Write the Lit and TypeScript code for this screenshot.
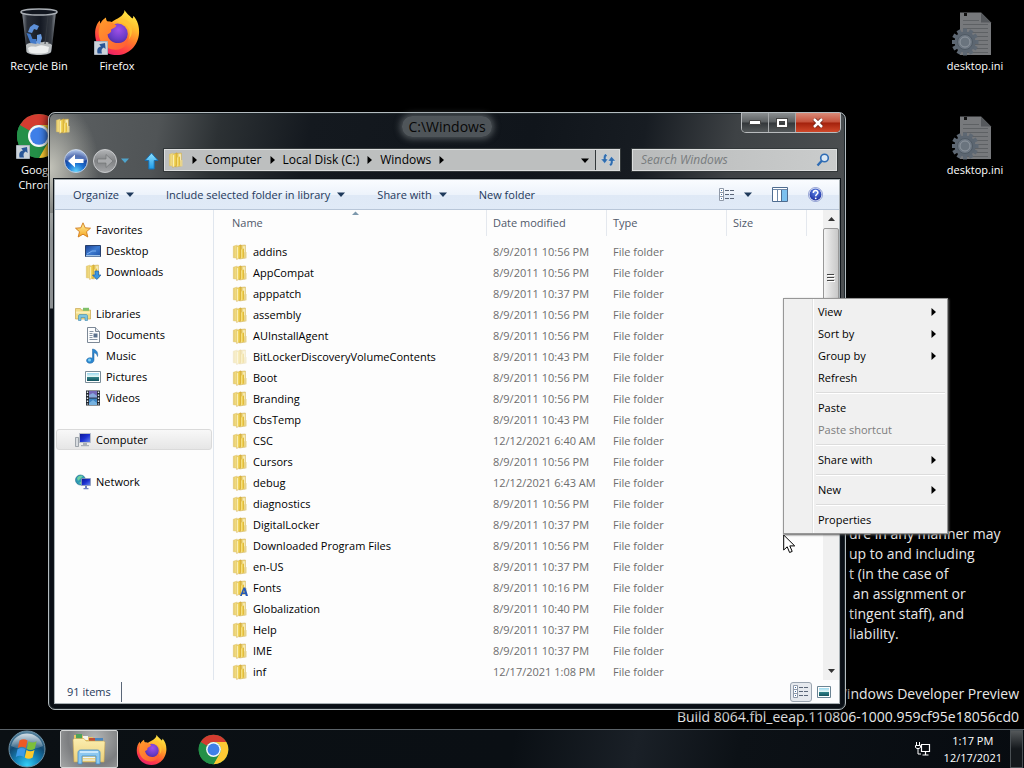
import { LitElement, html, svg, css, nothing } from "lit";
import { customElement } from "lit/decorators.js";

const P = "8/9/2011 ";
const FILES: [string, string, string?][] = [
  ["addins", P + "10:56 PM"],
  ["AppCompat", P + "10:56 PM"],
  ["apppatch", P + "10:37 PM"],
  ["assembly", P + "10:56 PM"],
  ["AUInstallAgent", P + "10:56 PM"],
  ["BitLockerDiscoveryVolumeContents", P + "10:43 PM", "faded"],
  ["Boot", P + "10:56 PM"],
  ["Branding", P + "10:56 PM"],
  ["CbsTemp", P + "10:43 PM"],
  ["CSC", "12/12/2021 6:40 AM"],
  ["Cursors", P + "10:56 PM"],
  ["debug", "12/12/2021 6:43 AM"],
  ["diagnostics", P + "10:56 PM"],
  ["DigitalLocker", P + "10:37 PM"],
  ["Downloaded Program Files", P + "10:56 PM"],
  ["en-US", P + "10:37 PM"],
  ["Fonts", P + "10:16 PM", "fonts"],
  ["Globalization", P + "10:40 PM"],
  ["Help", P + "10:37 PM"],
  ["IME", P + "10:37 PM"],
  ["inf", "12/17/2021 1:08 PM"],
];

type MenuEntry = { label: string; sub?: boolean; disabled?: boolean } | null;
const MENU: MenuEntry[] = [
  { label: "View", sub: true },
  { label: "Sort by", sub: true },
  { label: "Group by", sub: true },
  { label: "Refresh" },
  null,
  { label: "Paste" },
  { label: "Paste shortcut", disabled: true },
  null,
  { label: "Share with", sub: true },
  null,
  { label: "New", sub: true },
  null,
  { label: "Properties" },
];

const defs = html`<svg class="defs" aria-hidden="true">
  <defs>
    <linearGradient id="fold" x1="0" x2="1"><stop offset="0" stop-color="#fbeb9a"/><stop offset=".45" stop-color="#f0d355"/><stop offset="1" stop-color="#d9ae32"/></linearGradient>
    <linearGradient id="foldBack" x1="0" x2="1"><stop offset="0" stop-color="#e6ca68"/><stop offset="1" stop-color="#f6e48e"/></linearGradient>
    <linearGradient id="star" x1="0" y1="0" x2="0" y2="1"><stop offset="0" stop-color="#fff2a0"/><stop offset="1" stop-color="#f5a623"/></linearGradient>
    <linearGradient id="blueScr" x1="0" y1="0" x2="1" y2="1"><stop offset="0" stop-color="#1c3f92"/><stop offset=".5" stop-color="#3d7bd0"/><stop offset="1" stop-color="#1d52a8"/></linearGradient>
    <linearGradient id="deepScr" x1="0" y1="0" x2="1" y2="1"><stop offset="0" stop-color="#0a1590"/><stop offset=".5" stop-color="#1b2fd0"/><stop offset="1" stop-color="#6c8ff0"/></linearGradient>
    <linearGradient id="arrowBlue" x1="0" y1="0" x2="0" y2="1"><stop offset="0" stop-color="#8fe2ff"/><stop offset="1" stop-color="#1d9be8"/></linearGradient>
    <radialGradient id="back" cx=".5" cy=".95" r=".9"><stop offset="0" stop-color="#5fd4ff"/><stop offset=".4" stop-color="#1a6fd0"/><stop offset=".75" stop-color="#1c3f96"/><stop offset="1" stop-color="#8aa8dc"/></radialGradient>
    <linearGradient id="fwd" x1="0" y1="0" x2="0" y2="1"><stop offset="0" stop-color="#b4b6b8"/><stop offset=".5" stop-color="#808284"/><stop offset="1" stop-color="#a4a6a8"/></linearGradient>
    <linearGradient id="ffBody" x1=".8" y1="0" x2=".3" y2="1"><stop offset="0" stop-color="#fff04a"/><stop offset=".3" stop-color="#ffbd2e"/><stop offset=".55" stop-color="#ff7a2a"/><stop offset=".8" stop-color="#ff3a48"/><stop offset="1" stop-color="#e8206c"/></linearGradient>
    <linearGradient id="ffHead" x1="0" y1="0" x2="1" y2="1"><stop offset="0" stop-color="#ff9a2a"/><stop offset="1" stop-color="#ff5a36"/></linearGradient>
    <radialGradient id="ffGlobe" cx=".55" cy=".3" r=".75"><stop offset="0" stop-color="#a050e8"/><stop offset=".6" stop-color="#6a3cc8"/><stop offset="1" stop-color="#4a2a98"/></radialGradient>
    <radialGradient id="orb" cx=".5" cy=".95" r=".95"><stop offset="0" stop-color="#35d0f8"/><stop offset=".35" stop-color="#1683b8"/><stop offset=".65" stop-color="#124a72"/><stop offset="1" stop-color="#5a86a0"/></radialGradient>
    <linearGradient id="orbGloss" x1="0" y1="0" x2="0" y2="1"><stop offset="0" stop-color="#fff" stop-opacity=".75"/><stop offset="1" stop-color="#fff" stop-opacity=".12"/></linearGradient>
    <linearGradient id="bin" x1="0" x2="1"><stop offset="0" stop-color="#8a9098"/><stop offset=".15" stop-color="#2a2f38"/><stop offset=".55" stop-color="#151a24"/><stop offset=".85" stop-color="#333840"/><stop offset="1" stop-color="#858a90"/></linearGradient>
    <linearGradient id="bigFold" x1="0" y1="0" x2="0" y2="1"><stop offset="0" stop-color="#fbeeb0"/><stop offset="1" stop-color="#ecd07a"/></linearGradient>
    <linearGradient id="pic" x1="0" y1="0" x2="0" y2="1"><stop offset="0" stop-color="#9ad8f0"/><stop offset=".45" stop-color="#e4f6f4"/><stop offset=".55" stop-color="#2f7f86"/><stop offset="1" stop-color="#155560"/></linearGradient>
    <radialGradient id="helpG" cx=".5" cy=".3" r=".7"><stop offset="0" stop-color="#5f86e8"/><stop offset="1" stop-color="#1c2fa0"/></radialGradient>
  </defs>
</svg>`;

const ico = (w: number, h: number, vb: string, body: unknown, cls = "") =>
  html`<svg class="ico ${cls}" width=${w} height=${h} viewBox=${vb} aria-hidden="true">${body}</svg>`;

const folderShape = svg`
  <path d="M7.5 1.5 13.4 1v13l-5.9 1z" fill="url(#foldBack)" stroke="#c9a445" stroke-width=".5"/>
  <path d="M11.5 2.2h1v7h-1z" fill="#fff" opacity=".75"/>
  <path d="M12.4 8h2.1v6.2l-2.1.4z" fill="#e7d38c"/>
  <path d="M1.3 2.2 5.2 1v13.200l-3.900-.4z" fill="url(#foldBack)" stroke="#d8bb62" stroke-width=".4"/>
  <path d="M4.600 2.600 8.600.9c.4-.1.6.1.6.5v11.400c0 .4-.2.7-.5.8L4.600 15.600z" fill="url(#fold)" stroke="#c9a03a" stroke-width=".4"/>
  <path d="M9.200 5.500 12 4.400v9.200l-2.800 1z" fill="url(#fold)"/>
  <path d="M5.300 3.100v11.400" stroke="#fffbe0" stroke-width=".7"/>`;
const folder = (kind?: string) =>
  ico(16, 16, "0 0 16 16", svg`${folderShape}${kind === "fonts"
    ? svg`<path fill-rule="evenodd" d="M8 16l3.400-8.600h2L16 16h-2.200l-.6-1.900h-2.800L9.800 16zm3-3.400h1.700l-.8-2.600z" fill="#2558b8"/>` : nothing}`,
    kind === "faded" ? "faded" : "");

const chrome = (s: number) => ico(s, s, "0 0 48 48", svg`
  <circle cx="24" cy="24" r="23" fill="#249048"/>
  <path d="M24 1a23 23 0 0 1 19.9 11.500H24A11.500 11.500 0 0 0 14 18.200L4.100 12.500A23 23 0 0 1 24 1z" fill="#d43c30"/>
  <path d="M43.900 12.500A23 23 0 0 1 24 47l9.960-17.250A11.500 11.500 0 0 0 24 12.500z" fill="#fcc934"/>
  <path d="M4.100 12.500 14.040 29.750A11.500 11.500 0 0 0 24 35.500a11 11 0 0 0 6-1.600L24 47A23 23 0 0 1 4.100 12.500z" fill="#249048"/>
  <circle cx="24" cy="24" r="11.500" fill="#f6f8fa"/><circle cx="24" cy="24" r="9.200" fill="#3f7fe8"/>`);

const firefox = (s: number) => ico(s, s, "0 0 48 48", svg`
  <path d="M32 1c1 3 5 5.500 8 9 1-.5 1-2 1-3 4.500 5 6.500 11 6 18.500C46 38.500 36 48 24 48 11 48 1.200 38.500 1.200 26 1 20 3 15 6 12l.6 3.500C8 12 10 10.500 12.500 8.800c0 2 .5 3 1.500 4.200 1.500 0 3-.1 4.500.5 5-4 12.500-5 13.500-12.500z" fill="url(#ffBody)"/>
  <circle cx="24.500" cy="26" r="10.800" fill="url(#ffGlobe)"/>
  <path d="M6.600 15.500c2-2 5-3 8-2.300 3 .3 6 1 8.900 4.300-1.500 2.500-5 3-6 4.500 1.500 1.500-1 3.500-3.500 4.500 1 6 6 9.500 12 9 6.500-.5 9.500-5.500 9.500-10 2.500 8-3 17-13 17C11 42.500 4 33 5 23z" fill="url(#ffHead)"/>
  <path d="M24 14c7-1 12 3 13 9 1 4 0 7-1 9 5-5 5-14 0-19-3-3-8-3-12 1z" fill="#ffc233"/>`);

const shortcut = html`<span class="shortcut">${ico(14, 14, "0 0 14 14", svg`
  <path d="M.5.500h13v13h-13z" fill="#ccd3da" stroke="#a8b0ba"/>
  <path d="M3.600 12.500C2.600 8.500 4 6 7 5.600L5.200 3.200 11 2l.6 6-1.900-1.500C7.500 7.400 7 9.500 8 12.500z" fill="#2a5696"/>`)}</span>`;

const recycle = ico(40, 48, "0 0 40 48", svg`
  <path d="M3 4 7.500 43c.5 3 4.500 4 12.500 4s12-1 12.500-4L37 4z" fill="url(#bin)"/>
  <path d="M7 37c3-3 5-1 8-3s6 1 9 0 6 0 9 3l-1 7c-3 4-21 4-24.500 0z" fill="#b9bdbf"/>
  <path d="M9 40c4-3 7 0 10-2s8 0 11 1l-1 5c-4 2-15 2-19 0z" fill="#eceeee"/>
  <ellipse cx="20" cy="4" rx="18" ry="3" fill="#11161f" stroke="#a9aeb4" stroke-width="1.500"/>
  <path d="M11 19l4-3 5 2-2 4-3-1-2 4-4-1z" fill="#5d90d8"/>
  <path d="M7.500 25l4 1 2 5 4 0v5l-6-1z" fill="#4279c8"/>
  <path d="M18 27l4-1 1 4-2 6-4-1 1-3z" fill="#6a9ce0"/>
  <path d="M29 8l-3 28M33 8l-3 28" stroke="#33383f" stroke-width="1"/>`);

const teeth = Array.from({ length: 12 }, (_, i) => i * 30);
const iniFile = ico(40, 44, "0 0 40 44", svg`
  <path d="M8 .5h21l10 10V43H8z" fill="#77797c"/>
  <path d="M29 .5v10h10z" fill="#56595d"/>
  <path d="M12 1h3v3h-3z" fill="#111"/>
  ${[8, 12, 16, 20, 24, 28, 32, 36, 40].map((y) => svg`<path d="M11 ${y}.5h${y < 11 ? 16 : 25}" stroke="#5e6164"/>`)}
  ${teeth.map((a) => svg`<path d="M11 16.500h4v5h-4z" fill="#5e6873" transform="rotate(${a} 13 30)"/>`)}
  <circle cx="13" cy="30" r="10.500" fill="#5c6671"/>
  <circle cx="13" cy="30" r="7.500" fill="#6e7883" stroke="#505a64"/>
  <circle cx="13" cy="30" r="5" fill="#6a747e" stroke="#8f979f"/>`);

const orb = ico(38, 38, "0 0 38 38", svg`
  <circle cx="19" cy="19" r="18" fill="url(#orb)" stroke="#6f93a8" stroke-width="1"/>
  <path d="M3 16a16.500 16.500 0 0 1 32 0c-9 4-22 5-32 0z" fill="url(#orbGloss)"/>
  <path d="M11.500 10.500c3-1.800 5.500-1.700 8 0L17.800 18c-2.600-1.700-5-1.700-8 0z" fill="#ee5a24"/>
  <path d="M20.600 11.200c2.600 1.600 5.200 1.600 8 0L26.800 18.700c-2.800 1.600-5.400 1.600-8 0z" fill="#7cbf3a"/>
  <path d="M9.500 19.300c3-1.700 5.400-1.700 8 0L15.800 27c-2.600-1.700-5-1.700-8 0z" fill="#3c9ae8"/>
  <path d="M18.500 20c2.600 1.700 5.200 1.700 8 0l-1.800 7.500c-2.800 1.700-5.300 1.700-8 0z" fill="#fdc92c"/>`);

const explorerIcon = ico(34, 32, "0 0 34 32", svg`
  <path d="M2 2h8l2 2h9v24H2z" fill="#e9c765"/>
  <path d="M4 1h6v5H4z" fill="#4fa35a"/><path d="M11 3h5v4h-5z" fill="#f4f4ee"/><path d="M17 5h6v4h-6z" fill="#c05038"/>
  <path d="M23 5h8v8h-8z" fill="#4a86c0"/>
  <path d="M1 7c0-1 1-1.500 2-1.500h9l2 2.500h17c1 0 2 .5 2 1.500L32 29H2z" fill="url(#bigFold)" stroke="#c8a450" stroke-width=".6"/>
  <path d="M6 31V20c0-2 1-3 3-3h16c2 0 3 1 3 3v11h-4v-8H10v8z" fill="#8cc8f0" stroke="#3f8cc8" stroke-width=".8"/>
  <path d="M8 19h18" stroke="#dff3ff" stroke-width="1.500"/>
  <path d="M11 27h12M11 24.500h12" stroke="#e8f6ff"/>`);

const NAV: Record<string, unknown> = {
  Favorites: svg`<path d="M8 .8 10.200 5.800 15.500 6.200 11.500 9.700 12.800 15 8 12.200 3.200 15 4.500 9.700.5 6.200 5.800 5.800z" fill="url(#star)" stroke="#d07a1c" stroke-width=".9"/>`,
  Desktop: svg`<path d="M.5 2.500h15v11H.5z" fill="url(#blueScr)" stroke="#28406c"/><path d="M1 12h14v1.500H1z" fill="#9fc3e8"/><path d="M2 11l5-3h4" stroke="#79aef0" fill="none"/>`,
  Downloads: svg`${folderShape}<path d="M10 7h3.500v4H16l-4.200 4.500L7.500 11H10z" fill="#3b96e0" stroke="#1c5ea8" stroke-width=".7"/>`,
  Libraries: svg`<path d="M.5 2.500h5l1 1.500h9v9H.5z" fill="#f2dc86" stroke="#c9a850" stroke-width=".7"/><path d="M8 1.800h6v3H8z" fill="#7fc06a"/><path d="M1 5.500h14v2H1z" fill="#fbf0b8"/><path d="M3.500 14.500V10c0-1 .6-1.500 1.500-1.500h6c1 0 1.500.6 1.500 1.500v4.500h-2.500v-3H6v3z" fill="#7cc4e0" stroke="#3c88ae" stroke-width=".6"/>`,
  Documents: svg`<path d="M2.500.500h8l4 4v11h-12z" fill="#fcfdfe" stroke="#7c8896"/><path d="M10.500.5v4h4" fill="#dde4ea" stroke="#7c8896"/><path d="M4.500 4.500h4M4.500 6.500h3M4.500 8.500h3M4.500 10.500h3M4.500 12.500h8" stroke="#8694a4"/><path d="M8.500 6.500h4v4h-4z" fill="#5a708c"/>`,
  Music: svg`<path d="M7.500 1c3.500.5 6 3 5 7.500-.5-2.500-2-3.500-3.500-3.700V12c0 2-1.800 3.300-4 3.300S1.500 14 1.500 12.500s1.700-2.800 3.700-2.800c1 0 1.600.2 2.300.5z" fill="#2b86d0" stroke="#1b5f9c" stroke-width=".5"/><circle cx="4.500" cy="12" r="1.500" fill="#7fd0f4"/>`,
  Pictures: svg`<path d="M.5 2.500h15v11H.5z" fill="#fff" stroke="#7a8c98"/><path d="M2 4h12v8H2z" fill="url(#pic)"/>`,
  Videos: svg`<path d="M1 .5h14v15H1z" fill="#20262e"/><path d="M4 1h8v6.500H4z" fill="#7468b8"/><path d="M4 8.500h8V15H4z" fill="#3f86c4"/><path d="M4 5l4-2 4 3v1.500H4zM4 13l4-3 4 3v2H4z" fill="#8fc4ec" opacity=".7"/><path d="M2.500 1.500v13M13.500 1.500v13" stroke="#e6eaee" stroke-width="1.400" stroke-dasharray="1.500 1.500"/>`,
  Computer: svg`<path d="M.5 5.500h3v9h-3z" fill="#d8dce0" stroke="#808890" stroke-width=".7"/><path d="M4.500 1.500h11v9h-11z" fill="url(#deepScr)" stroke="#b8bec8"/><path d="M8 11h4v2H8zM6 13h8v1.300H6z" fill="#a8aeb6"/>`,
  Network: svg`<circle cx="5.500" cy="6" r="5" fill="#2f9ab4" stroke="#1c6a8c" stroke-width=".6"/><path d="M2 4c2-3 5-3 6-2L5 5 3 7zM4 9l3-2 2 1-2 3z" fill="#6fd0a0"/><path d="M6.500 4.500h9v7h-9z" fill="url(#deepScr)" stroke="#8f9cb8" stroke-width=".8"/><path d="M10 12h2v2h-2zM8.500 14h5v1.200h-5z" fill="#7080c0"/>`,
};
const NAV_GROUPS: string[][] = [["Favorites", "Desktop", "Downloads"], ["Libraries", "Documents", "Music", "Pictures", "Videos"], ["Computer"], ["Network"]];

const down = ico(8, 5, "0 0 8 5", svg`<path d="M0 .5h8L4 5z" fill="currentColor"/>`);
const right = ico(5, 8, "0 0 5 8", svg`<path d="M.5 0v8L5 4z" fill="currentColor"/>`);
const details = ico(16, 13, "0 0 16 13", svg`
  <path d="M.5.500h4v12h-4zM.5 4.500h4M.5 8.500h4" fill="#fff" stroke="#8f99a8"/>
  <path d="M2 2.500h1M2 6.500h1M2 10.500h1" stroke="#3c6ea8"/>
  <path d="M6 2.500h4m1 0h4M6 6.500h4m1 0h4M6 10.500h4m1 0h4" stroke="#5b6678"/>`);

@customElement("app-root")
export class AppRoot extends LitElement {
  static styles = css`
    :host { display: block; position: relative; height: 100vh; overflow: hidden; background: #000; color: #000; font: 11px/16px "Open Sans", "Noto Sans", sans-serif; }
    * { box-sizing: border-box; }
    button, input, select { font: inherit; color: inherit; margin: 0; padding: 0; border: 0; background: none; border-radius: 0; }
    a { color: inherit; text-decoration: none; }
    .defs { position: absolute; width: 0; height: 0; }
    .ico { display: block; flex: none; }
    .faded { opacity: .4; }

    .desktop { height: 100%; display: flex; flex-direction: column; }
    .surface { flex: 1; min-height: 0; display: flex; justify-content: space-between; padding: 8px 0 0; }
    .grid { display: grid; grid-template-columns: 78px 78px; grid-auto-rows: 104px; }
    .grid.right { grid-template-columns: 98px; }
    .shortcut-item { display: flex; flex-direction: column; align-items: center; gap: 2px; color: #fff; font-size: 11px; line-height: 15px; text-align: center; }
    .pict { position: relative; height: 48px; display: flex; align-items: center; justify-content: center; }
    .grid.right .pict { padding: 4px 6px 0 0; }
    .shortcut { position: absolute; left: 0; bottom: 1px; }
    .shortcut-item .name { max-width: 70px; }

    .legal { position: absolute; left: 849px; top: 524px; margin: 0; color: #e8e8e8; font-size: 14px; line-height: 20px; white-space: pre; }
    .mark { position: absolute; right: 5px; bottom: 40px; margin: 0; color: #e8e8e8; font-size: 14px; line-height: 23px; text-align: right; white-space: nowrap; }

    .window { position: absolute; left: 48px; top: 112px; right: 178px; bottom: 58px; display: flex; flex-direction: column; padding: 0 6px 6px; border: 1px solid #b4bcc0; border-radius: 7px; box-shadow: inset 0 0 0 1px #20282c, 0 0 10px #000;
      background:
        radial-gradient(ellipse 50px 70px at 0 55px, #c4c4ba 0, transparent 100%),
        linear-gradient(to bottom, transparent 195px, #0a0f16 196px),
        linear-gradient(to right, #8c9092 0, #8c9092 6px, transparent 7px) 0 100px no-repeat,
        linear-gradient(100deg, #5c6062 0, #505456 110px, #2c3134 170px, #14191f 260px, #10151b 480px, #171c22 590px, #3e4245 680px, #55585a 100%); }
    .caption { display: flex; height: 36px; align-items: flex-start; justify-content: space-between; }
    .caption .sys { width: 98px; padding: 5px 0 0 0; }
    .title { margin: 3px 0 0; padding: 0 6px; font-size: 14px; line-height: 21px; font-weight: 400; border-radius: 10px; background: rgba(120, 126, 130, .6); box-shadow: 0 0 6px 2px rgba(120, 126, 130, .6); color: #080808; }
    .controls { display: flex; border: 1px solid #b9bcbe; border-top: 0; border-radius: 0 0 5px 5px; overflow: hidden; margin-right: -2px; }
    .controls button { width: 27px; height: 19px; display: flex; align-items: center; justify-content: center; background: linear-gradient(#8a8e90, #5a5e60 48%, #33373a 52%, #54585a); border-right: 1px solid #a6a9ab; }
    .controls button.close { width: 44px; border: 0; background: linear-gradient(#d98a78, #c4503a 48%, #a3210c 52%, #d0482a); }

    .nav { display: flex; height: 31px; align-items: flex-start; padding: 0 2px 0 8px; }
    .nav .round { margin-right: 3px; }
    .nav .recent { color: #4fa4cc; padding: 9px 15px 0 0; }
    .nav .up { padding: 3px 5px 0 0; }
    .address, .search { display: flex; height: 22px; align-items: center; border: 1px solid #dcdede; outline: 1px solid #33383a; outline-offset: 0; background: #bdbfbf; }
    .address { flex: 1; min-width: 0; }
    .crumbs { display: flex; flex: 1; align-items: center; gap: 8px; padding-left: 3px; font-size: 12px; }
    .address .drop { width: 20px; height: 20px; display: flex; align-items: center; justify-content: center; }
    .address .go { width: 24px; height: 20px; display: flex; align-items: center; justify-content: center; border-left: 1px solid #33383a; background: #c8caca; }
    .search { width: 205px; margin-left: 12px; padding: 0 6px 0 8px; background: linear-gradient(to right, #b9bbbb, #cacccc); font-size: 12px; }
    .search input { flex: 1; min-width: 0; font-style: italic; outline: 0; }
    .search input::placeholder { color: #787c7e; opacity: 1; }

    .client { flex: 1; min-height: 0; display: flex; flex-direction: column; background: #fdfdfd; outline: 1px solid #a8b0b4; box-shadow: 0 0 0 2px #10151a; }
    .toolbar { display: flex; height: 30px; align-items: center; padding: 0 16px 0 18px; gap: 32px; color: #1e395b; background: linear-gradient(#fafcff, #edf3fb 50%, #dfe9f6 52%, #e0eaf7); border-bottom: 1px solid #b8c6d8; }
    .toolbar button { display: flex; align-items: center; gap: 7px; }
    .tools { margin-left: auto; display: flex; align-items: center; gap: 20px; }
    .tools .views { gap: 9px; }
    .body { flex: 1; min-height: 0; display: flex; }
    .tree { width: 159px; border-right: 1px solid #e0e6ee; padding: 9px 1px 0; display: flex; flex-direction: column; gap: 21px; }
    .tree ul { list-style: none; margin: 0; padding: 0; }
    .tree a { display: flex; align-items: center; gap: 5px; height: 21px; border: 1px solid transparent; border-radius: 3px; padding-left: 18px; }
    .tree li.child a { padding-left: 28px; }
    .tree a.current { border-color: #dadada; background: linear-gradient(#f8f8f8, #e6e6e6); }
    .files { flex: 1; min-width: 0; overflow: hidden; }
    table { width: 100%; table-layout: fixed; border-collapse: separate; border-spacing: 0; }
    th { font-weight: 400; text-align: left; height: 26px; padding: 0 0 0 6px; color: #50596a; border-right: 1px solid #e4e8ee; position: relative; }
    th:first-child { padding-left: 18px; }
    th:last-child { border: 0; }
    .sort { position: absolute; left: 138px; top: 1px; }
    tbody::before { content: ""; display: block; height: 5px; }
    td { height: 21px; padding: 0 0 0 6px; color: #6d6d6d; white-space: nowrap; }
    td:first-child { padding-left: 18px; color: #000; }
    .cell { display: flex; align-items: center; gap: 5px; }
    .c-name { width: 273px; } .c-date { width: 120px; } .c-size { width: 80px; }
    .scroll { width: 16px; display: flex; flex-direction: column; background: #f0f0f0; color: #333; }
    .scroll button { height: 18px; display: flex; align-items: center; justify-content: center; }
    .track { flex: 1; }
    .thumb { height: 100px; border: 1px solid #989898; border-radius: 2px; background: linear-gradient(to right, #f4f4f4, #dcdcdc 50%, #c8c8c8); display: flex; align-items: center; justify-content: center; }
    .status { height: 23px; display: flex; align-items: center; justify-content: space-between; padding: 0 7px 0 12px; color: #1e395b; background: #fcfcfd; }
    .status .count { padding-right: 10px; border-right: 1px solid #5a6678; line-height: 20px; }
    .modes { display: flex; gap: 4px; align-items: center; }
    .modes button { width: 22px; height: 20px; display: flex; align-items: center; justify-content: center; border-radius: 3px; }
    .modes .on { border: 1px solid #9aa4b0; background: #e6e9ee; }
    .modes button:last-child { width: 16px; }

    .menu { position: absolute; left: 783px; top: 298px; width: 165px; padding: 2px; border: 1px solid #979797; box-shadow: 1px 1px 2px #555;
      background: linear-gradient(to right, transparent 28px, #e2e3e3 28px, #e2e3e3 29px, #fff 29px, #fff 30px, transparent 30px) #f0f0f0; }
    .menu button { display: flex; width: 100%; height: 22px; align-items: center; justify-content: space-between; padding: 0 9px 0 32px; }
    .menu button:disabled { color: #7d7d7d; }
    .menu hr { height: 2px; margin: 3px 0 3px 30px; border: 0; border-top: 1px solid #dcdcdc; background: #fff; }
    .cursor { position: absolute; left: 783px; top: 534px; }

    .taskbar { position: relative; height: 39px; display: flex; align-items: center; border-top: 1px solid #5a6268; color: #fff; background: linear-gradient(100deg, #0b1014 0, #0a0f14 50%, #1a2027 62%, #0c1116 72%, #070b10 100%); }
    .taskbar .start { padding: 0 14px 0 8px; }
    .taskbar .app { width: 58px; height: 38px; display: flex; align-items: center; justify-content: center; margin-right: 4px; }
    .taskbar .active { border: 1px solid #d4d6d6; border-radius: 2px; background: radial-gradient(circle at 60% 20%, #b4b6b6, #7c7e80 60%, #a4a6a6); }
    .tray { margin-left: auto; display: flex; align-items: center; gap: 13px; height: 100%; }
    .clock { text-align: center; line-height: 17px; }
    .peek { width: 13px; height: 38px; border: 1px solid #4a5054; background: linear-gradient(#54585a, #14181c 50%); margin: 0 1px 0 -5px; }
  `;

  private desk(name: unknown, pict: unknown, link = false) {
    return html`<a class="shortcut-item" href="#"><span class="pict">${pict}${link ? shortcut : nothing}</span><span class="name">${name}</span></a>`;
  }

  render() {
    return html`${defs}
      <main class="desktop">
        <div class="surface">
          <nav class="grid" aria-label="Desktop">
            ${this.desk("Recycle Bin", recycle)}
            ${this.desk("Firefox", firefox(46), true)}
            ${this.desk("Google Chrome", chrome(46), true)}
          </nav>
          <nav class="grid right" aria-label="Desktop files">
            ${this.desk("desktop.ini", iniFile)}
            ${this.desk("desktop.ini", iniFile)}
          </nav>
        </div>
        ${this.taskbar()}
      </main>
      <p class="legal">ure in any manner may
up to and including
t (in the case of
 an assignment or
tingent staff), and
liability.</p>
      <p class="mark">Windows Developer Preview<br>Build 8064.fbl_eeap.110806-1000.959cf95e18056cd0</p>
      ${this.explorer()} ${this.menu()}
      <span class="cursor">${ico(13, 20, "0 0 13 20", svg`<path d="M.7 1v15l3.500-3.200L6.600 18.500l2.600-1.100-2.400-5.500h4.900z" fill="#fff" stroke="#000"/>`)}</span>`;
  }

  private explorer() {
    return html`<section class="window" aria-label="C:\\Windows">
      <header class="caption">
        <span class="sys">${folder()}</span>
        <h1 class="title">C:\\Windows</h1>
        <div class="controls">
          <button aria-label="Minimize">${ico(12, 5, "0 0 12 5", svg`<path d="M.5.500h11v4H.5z" fill="#fff" stroke="#444"/>`)}</button>
          <button aria-label="Maximize">${ico(12, 10, "0 0 12 10", svg`<path d="M2 2h8v6H2z" fill="none" stroke="#444" stroke-width="4"/><path d="M2 2h8v6H2z" fill="none" stroke="#fff" stroke-width="2"/>`)}</button>
          <button class="close" aria-label="Close">${ico(12, 10, "0 0 12 10", svg`<path d="M2 1l8 8M10 1L2 9" stroke="#6a2015" stroke-width="4"/><path d="M2 1l8 8M10 1L2 9" stroke="#fff" stroke-width="2.500"/>`)}</button>
        </div>
      </header>
      <div class="nav">
        <button class="round" aria-label="Back">${ico(26, 26, "0 0 26 26", svg`<circle cx="13" cy="12" r="11.500" fill="url(#back)" stroke="#c4d0e0"/><path d="M2.500 11a10.500 10.500 0 0 1 21 0c-6 2-15 2-21 0z" fill="#fff" opacity=".25"/><path d="M5 12l7-6.500V10h8.500v4H12v4.500z" fill="#fff"/>`)}</button>
        <button class="round" aria-label="Forward">${ico(26, 26, "0 0 26 26", svg`<circle cx="13" cy="12" r="11.500" fill="url(#fwd)" stroke="#c8cacc"/><path d="M21 12l-7-6.500V10H5.500v4H14v4.500z" fill="#a8aaac" stroke="#6c6e70" stroke-width=".6"/>`)}</button>
        <button class="recent" aria-label="Recent pages">${down}</button>
        <button class="up" aria-label="Up">${ico(15, 18, "0 0 15 18", svg`<path d="M7.500 1 14 8.500h-3.800V17H4.800V8.500H1z" fill="url(#arrowBlue)" stroke="#1a70b0"/>`)}</button>
        <div class="address">
          <nav class="crumbs" aria-label="Address">${folder()}${right}<a href="#">Computer</a>${right}<a href="#">Local Disk (C:)</a>${right}<a href="#">Windows</a>${right}</nav>
          <button class="drop" aria-label="Previous locations">${down}</button>
          <button class="go" aria-label="Refresh">${ico(16, 14, "0 0 16 14", svg`<path d="M5.500.8C3.600 2 3.200 3.500 3.400 6H.8l4 4.500L8 6H6c-.2-1.500 0-2.500 1.300-3.600zM10.800 13.200c1.900-1.200 2.400-2.700 2.200-5.200h2.500l-4-4.500L8 8h2.400c.2 1.500 0 2.500-1.300 3.600z" fill="#2f6cae" stroke="#dfe8f2" stroke-width=".4"/>`)}</button>
        </div>
        <label class="search"><input type="search" aria-label="Search Windows" placeholder="Search Windows">
          ${ico(14, 14, "0 0 14 14", svg`<circle cx="8.500" cy="5" r="3.800" fill="#dbe8f4" stroke="#2f6cb4" stroke-width="1.600"/><path d="M5.800 7.800 1.500 12.500" stroke="#2f6cb4" stroke-width="2.400"/>`)}</label>
      </div>
      <div class="client">
        <div class="toolbar">
          <button>Organize ${down}</button>
          <button>Include selected folder in library ${down}</button>
          <button>Share with ${down}</button>
          <button>New folder</button>
          <div class="tools">
            <button class="views" aria-label="Change your view">${details}${down}</button>
            <button aria-label="Preview pane">${ico(16, 15, "0 0 16 15", svg`<path d="M.5.500h15v14H.5z" fill="#fff" stroke="#4e6c90"/><path d="M1 2.500h14M5.500 3v11" stroke="#6e88a8"/><path d="M10 3h5v11h-5z" fill="#7cc0ee"/><path d="M9.500 3v11" stroke="#4e6c90"/>`)}</button>
            <button aria-label="Get help">${ico(15, 15, "0 0 15 15", svg`<circle cx="7.500" cy="7.500" r="7" fill="#eef2fb" stroke="#6a7cc0" stroke-width=".7"/><circle cx="7.500" cy="7.500" r="5.900" fill="url(#helpG)"/><path d="M5.300 5.900c0-3 4.600-3 4.600-.3 0 1.700-2.200 1.700-2.200 3.600" stroke="#fff" stroke-width="1.500" fill="none"/><circle cx="7.700" cy="11.300" r=".9" fill="#fff"/>`)}</button>
          </div>
        </div>
        <div class="body">
          <nav class="tree" aria-label="Navigation pane">
            ${NAV_GROUPS.map((g) => html`<ul>${g.map((n, i) => html`<li class=${i ? "child" : ""}><a href="#" class=${n === "Computer" ? "current" : ""}>${ico(16, 16, "0 0 16 16", NAV[n])}${n}</a></li>`)}</ul>`)}
          </nav>
          <div class="files">
            <table>
              <colgroup><col class="c-name"><col class="c-date"><col class="c-date"><col class="c-size"><col></colgroup>
              <thead><tr><th>Name<span class="sort">${ico(7, 4, "0 0 7 4", svg`<path d="M0 4 3.500.500 7 4z" fill="#7c98ac"/>`)}</span></th><th>Date modified</th><th>Type</th><th>Size</th><th></th></tr></thead>
              <tbody>${FILES.map(([n, d, k]) => html`<tr><td><span class="cell">${folder(k)}${n}</span></td><td>${d}</td><td>File folder</td><td></td><td></td></tr>`)}</tbody>
            </table>
          </div>
          <div class="scroll">
            <button aria-label="Scroll up">${ico(7, 4, "0 0 7 4", svg`<path d="M0 4 3.500 0 7 4z" fill="#333"/>`)}</button>
            <div class="track"><div class="thumb">${ico(8, 8, "0 0 8 8", svg`<path d="M0 .5h7M0 3.500h7M0 6.500h7" stroke="#444"/><path d="M1 1.500h7M1 4.500h7M1 7.500h7" stroke="#fff"/>`)}</div></div>
            <button aria-label="Scroll down">${ico(7, 4, "0 0 7 4", svg`<path d="M0 0h7L3.500 4z" fill="#333"/>`)}</button>
          </div>
        </div>
        <footer class="status">
          <span class="count">91 items</span>
          <span class="modes"><button class="on" aria-label="Details">${details}</button><button aria-label="Large icons">${ico(14, 12, "0 0 14 12", svg`<path d="M.5.500h13v11H.5z" fill="#fff" stroke="#6c8494"/><path d="M2 2h10v8H2z" fill="url(#pic)"/>`)}</button></span>
        </footer>
      </div>
    </section>`;
  }

  private menu() {
    return html`<div class="menu" role="menu">
      ${MENU.map((m) => m ? html`<button role="menuitem" ?disabled=${m.disabled}>${m.label}${m.sub ? right : nothing}</button>` : html`<hr>`)}
    </div>`;
  }

  private taskbar() {
    return html`<footer class="taskbar">
      <button class="start" aria-label="Start">${orb}</button>
      <button class="app active" aria-label="Windows Explorer">${explorerIcon}</button>
      <button class="app" aria-label="Firefox">${firefox(31)}</button>
      <button class="app" aria-label="Google Chrome">${chrome(31)}</button>
      <div class="tray">
        ${ico(16, 14, "0 0 16 14", svg`<path d="M6.500 2.500h8v7h-8zM10.500 10v3M7.500 13h6" fill="none" stroke="#fff" stroke-width="1.200"/><path d="M1.500 0v3M4.500 0v3M.5 3.500h5v2l-1.500 1h-2l-1.500-1zM3 6.500V12h3" fill="none" stroke="#fff"/>`)}
        <time class="clock">1:17 PM<br>12/17/2021</time>
        <button class="peek" aria-label="Show desktop"></button>
      </div>
    </footer>`;
  }
}
